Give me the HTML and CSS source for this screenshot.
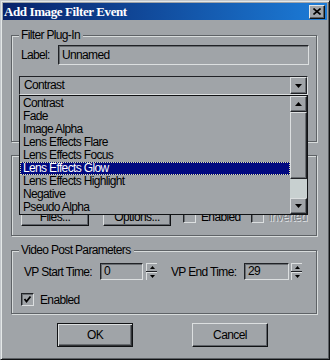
FILE: index.html
```html
<!DOCTYPE html>
<html>

<head>
    <meta charset="UTF-8">
    <title>Add Image Filter Event</title>
    <link rel="stylesheet" href="styles.css">
</head>

<body>

    <div class="window">
        <div class="titlebar">
            <span class="title">Add Image Filter Event</span>
            <span class="close">
                <svg width="8" height="7" viewBox="0 0 8 7"><path d="M0.5 0.5 L7.5 6.5 M7.5 0.5 L0.5 6.5" stroke="#000" stroke-width="1.6"/></svg>
            </span>
        </div>

        <div class="client">

            <div class="group group-filter">
                <div class="group-title"><span>Filter Plug-In</span></div>
                <div class="label-row">
                    <span class="label-name">Label:</span>
                    <div class="field field-label">Unnamed</div>
                </div>
                <div class="combo">
                    <div class="combo-text">Contrast</div>
                    <span class="combo-btn">
                        <svg width="7" height="4" viewBox="0 0 7 4"><polygon points="0,0 7,0 3.5,4" fill="#000"/></svg>
                    </span>
                    <div class="droplist">
                        <div class="items">
                            <div class="item">Contrast</div>
                            <div class="item">Fade</div>
                            <div class="item">Image Alpha</div>
                            <div class="item">Lens Effects Flare</div>
                            <div class="item">Lens Effects Focus</div>
                            <div class="item sel">Lens Effects Glow</div>
                            <div class="item">Lens Effects Highlight</div>
                            <div class="item">Negative</div>
                            <div class="item">Pseudo Alpha</div>
                        </div>
                        <div class="scrollbar">
                            <span class="sb-btn">
                                <svg width="7" height="4" viewBox="0 0 7 4"><polygon points="0,4 7,4 3.5,0" fill="#000"/></svg>
                            </span>
                            <span class="sb-thumb"></span>
                            <span class="sb-track"></span>
                            <span class="sb-btn">
                                <svg width="7" height="4" viewBox="0 0 7 4"><polygon points="0,0 7,0 3.5,4" fill="#000"/></svg>
                            </span>
                        </div>
                    </div>
                </div>
                <!-- hidden under the open list -->
                <div class="btn-row">
                    <button class="btn btn-small"></button>
                    <button class="btn btn-small btn-gap"></button>
                </div>
            </div>

            <div class="group group-mask">
                <div class="group-title"><span></span></div>
                <div class="combo combo-mask">
                    <div class="combo-text"></div>
                    <span class="combo-btn"></span>
                </div>
                <div class="mask-row">
                    <button class="btn btn-mask">Files...</button>
                    <button class="btn btn-mask btn-gap">Options...</button>
                    <label class="check check-enabled"><span class="box"></span>Enabled</label>
                    <label class="check check-inverted disabled"><span class="box"></span>Inverted</label>
                </div>
            </div>

            <div class="group group-vp">
                <div class="group-title"><span>Video Post Parameters</span></div>
                <div class="spin-row">
                    <span class="spin-label start-label">VP Start Time:</span>
                    <div class="field field-start">0</div>
                    <div class="spin spin-start">
                        <span class="spin-btn"><svg width="5" height="3" viewBox="0 0 5 3"><polygon points="0,3 5,3 2.5,0" fill="#000"/></svg></span>
                        <span class="spin-btn"><svg width="5" height="3" viewBox="0 0 5 3"><polygon points="0,0 5,0 2.5,3" fill="#000"/></svg></span>
                    </div>
                    <span class="spin-label end-label">VP End Time:</span>
                    <div class="field field-end">29</div>
                    <div class="spin spin-end">
                        <span class="spin-btn"><svg width="5" height="3" viewBox="0 0 5 3"><polygon points="0,3 5,3 2.5,0" fill="#000"/></svg></span>
                        <span class="spin-btn"><svg width="5" height="3" viewBox="0 0 5 3"><polygon points="0,0 5,0 2.5,3" fill="#000"/></svg></span>
                    </div>
                </div>
                <div class="check-row">
                    <label class="check">
                        <span class="box">
                            <svg width="9" height="9" viewBox="0 0 9 9"><polyline points="1.5,4 3.5,6.5 7.5,1.5" fill="none" stroke="#000" stroke-width="1.8"/></svg>
                        </span>
                        Enabled
                    </label>
                </div>
            </div>

            <div class="dialog-buttons">
                <button class="btn btn-dialog btn-default">OK</button>
                <button class="btn btn-dialog">Cancel</button>
            </div>

        </div>
    </div>

</body>
</html>
```

FILE: styles.css
```css
*{
    margin: 0px;
    padding: 0px;
    box-sizing: border-box;
}
body{
    font-family: "Liberation Sans", Arial, sans-serif;
    font-size: 12px;
    letter-spacing: -0.65px;
    color: #000;
    background: #a0a4a8;
}
.window{
    width: 330px;
    height: 360px;
    padding: 2px;
    background: #a0a4a8;
    border: 1px solid;
    border-color: #c4c8cc #101214 #101214 #c4c8cc;
    box-shadow: inset 1px 1px 0 #e4e8e8, inset -1px -1px 0 #5c6064;
}
.titlebar{
    height: 17px;
    display: flex;
    align-items: center;
    justify-content: space-between;
    padding: 0px 2px 0px 1px;
    background: linear-gradient(to right, #08226a, #1c7cd8);
}
.title{
    color: #fff;
    font-family: "Liberation Serif", serif;
    font-weight: bold;
    font-size: 13px;
    letter-spacing: -0.4px;
}
.close{
    width: 16px;
    height: 14px;
    display: flex;
    align-items: center;
    justify-content: center;
    background: #a0a4a8;
    border: 1px solid;
    border-color: #e4e8e8 #101214 #101214 #e4e8e8;
    box-shadow: inset -1px -1px 0 #5c6064;
}

.client{
    padding-left: 8px;
}
.group{
    width: 306px;
    padding: 0px 8px 0px 7px;
    border: 1px solid #5e6266;
    box-shadow: inset 1px 1px 0 #d8dcdc, 1px 1px 0 #d8dcdc;
}
.group-title{
    height: 14px;
    margin-top: -8px;
    line-height: 14px;
}
.group-title span{
    display: inline-block;
    padding: 0px 3px 0px 2px;
    background: #a0a4a8;
}
.group-filter{
    margin-top: 15px;
    padding-bottom: 6px;
}
.group-mask{
    margin-top: 13px;
    padding-bottom: 9px;
}
.group-vp{
    margin-top: 14px;
    padding-bottom: 7px;
}

/* sunken edit fields */
.field{
    height: 20px;
    padding-left: 3px;
    line-height: 18px;
    border: 1px solid;
    border-color: #202226 #dcdfe0 #dcdfe0 #202226;
    box-shadow: inset 1px 1px 0 #686c70;
}
.label-row{
    height: 20px;
    margin-top: 3px;
    padding-left: 2px;
    display: flex;
    align-items: center;
}
.label-name{
    width: 37px;
}
.field-label{
    flex: 1;
    margin-right: -1px;
}

/* combo box */
.combo{
    position: relative;
    height: 19px;
    margin-top: 11px;
    display: flex;
    border: 1px solid;
    border-color: #202226 #dcdfe0 #dcdfe0 #202226;
}
.combo-mask{
    margin-top: 6px;
}
.combo-text{
    flex: 1;
    padding-left: 4px;
    line-height: 17px;
}
.combo-btn{
    width: 17px;
    height: 17px;
    display: flex;
    align-items: center;
    justify-content: center;
    border: 1px solid;
    border-color: #dcdfe0 #202226 #202226 #dcdfe0;
    box-shadow: inset -1px -1px 0 #686c70;
}

/* open drop-down list */
.droplist{
    position: absolute;
    top: 18px;
    left: -1px;
    right: -1px;
    height: 120px;
    z-index: 5;
    display: flex;
    background: #a0a4a8;
    border: 1px solid #101214;
}
.items{
    flex: 1;
    padding-top: 1px;
}
.item{
    height: 13px;
    line-height: 13px;
    padding-left: 3px;
}
.item.sel{
    background: #020a80;
    color: #fff;
    outline: 1px dotted #e4e4a8;
    outline-offset: -1px;
}
.scrollbar{
    width: 17px;
    display: flex;
    flex-direction: column;
}
.sb-btn, .sb-thumb{
    display: flex;
    align-items: center;
    justify-content: center;
    border: 1px solid;
    border-color: #dcdfe0 #202226 #202226 #dcdfe0;
    box-shadow: inset -1px -1px 0 #686c70;
}
.sb-btn{
    height: 16px;
}
.sb-thumb{
    height: 67px;
}
.sb-track{
    flex: 1;
    background: #c8d0d0;
}

/* buttons */
.btn{
    font-family: "Liberation Sans", Arial, sans-serif;
    font-size: 12px;
    letter-spacing: -0.6px;
    color: #000;
    background: #a0a4a8;
    border: 1px solid;
    border-color: #dcdfe0 #101214 #101214 #dcdfe0;
    box-shadow: inset -1px -1px 0 #60646a;
}
.btn-row{
    height: 23px;
    margin-top: 17px;
    padding-left: 2px;
    display: flex;
}
.btn-small{
    width: 68px;
}
.btn-gap{
    margin-left: 14px;
}
.mask-row{
    height: 19px;
    margin-top: 20px;
    padding-left: 2px;
    display: flex;
    align-items: center;
}
.btn-mask{
    width: 68px;
    height: 19px;
}

/* check boxes */
.check{
    display: flex;
    align-items: center;
}
.box{
    width: 13px;
    height: 13px;
    display: flex;
    align-items: center;
    justify-content: center;
    border: 1px solid;
    border-color: #202226 #dcdfe0 #dcdfe0 #202226;
    box-shadow: inset 1px 1px 0 #686c70;
}
.check-enabled{
    margin-left: 12px;
}
.check-enabled .box, .check-inverted .box{
    margin-right: 5px;
}
.check-inverted{
    margin-left: 10px;
}
.disabled{
    color: #7c8084;
    text-shadow: 1px 1px 0 #dcdfe0;
}
.check-row{
    height: 13px;
    margin-top: 13px;
    padding-left: 2px;
    display: flex;
}
.check-row .box{
    margin-right: 6px;
}

/* spinners */
.spin-row{
    height: 17px;
    margin-top: 6px;
    padding-left: 5px;
    display: flex;
    align-items: center;
}
.spin-row .field{
    height: 17px;
    line-height: 15px;
}
.start-label{
    width: 76px;
}
.end-label{
    width: 73px;
    margin-left: 14px;
}
.field-start{
    width: 43px;
}
.field-end{
    width: 45px;
}
.spin{
    width: 11px;
    height: 17px;
    display: flex;
    flex-direction: column;
    gap: 1px;
    background: #202226;
}
.spin-start{
    margin-left: 3px;
}
.spin-end{
    margin-left: 2px;
}
.spin-btn{
    height: 8px;
    display: flex;
    align-items: center;
    justify-content: center;
    background: #a0a4a8;
    border-top: 1px solid #dcdfe0;
    border-left: 1px solid #dcdfe0;
}

.dialog-buttons{
    margin-top: 9px;
    padding-left: 46px;
    display: flex;
    gap: 59px;
}
.btn-dialog{
    width: 76px;
    height: 24px;
}
.btn-default{
    border-color: #101214;
    box-shadow: inset 1px 1px 0 #dcdfe0, inset -1px -1px 0 #303236, inset -2px -2px 0 #686c70;
}
```
